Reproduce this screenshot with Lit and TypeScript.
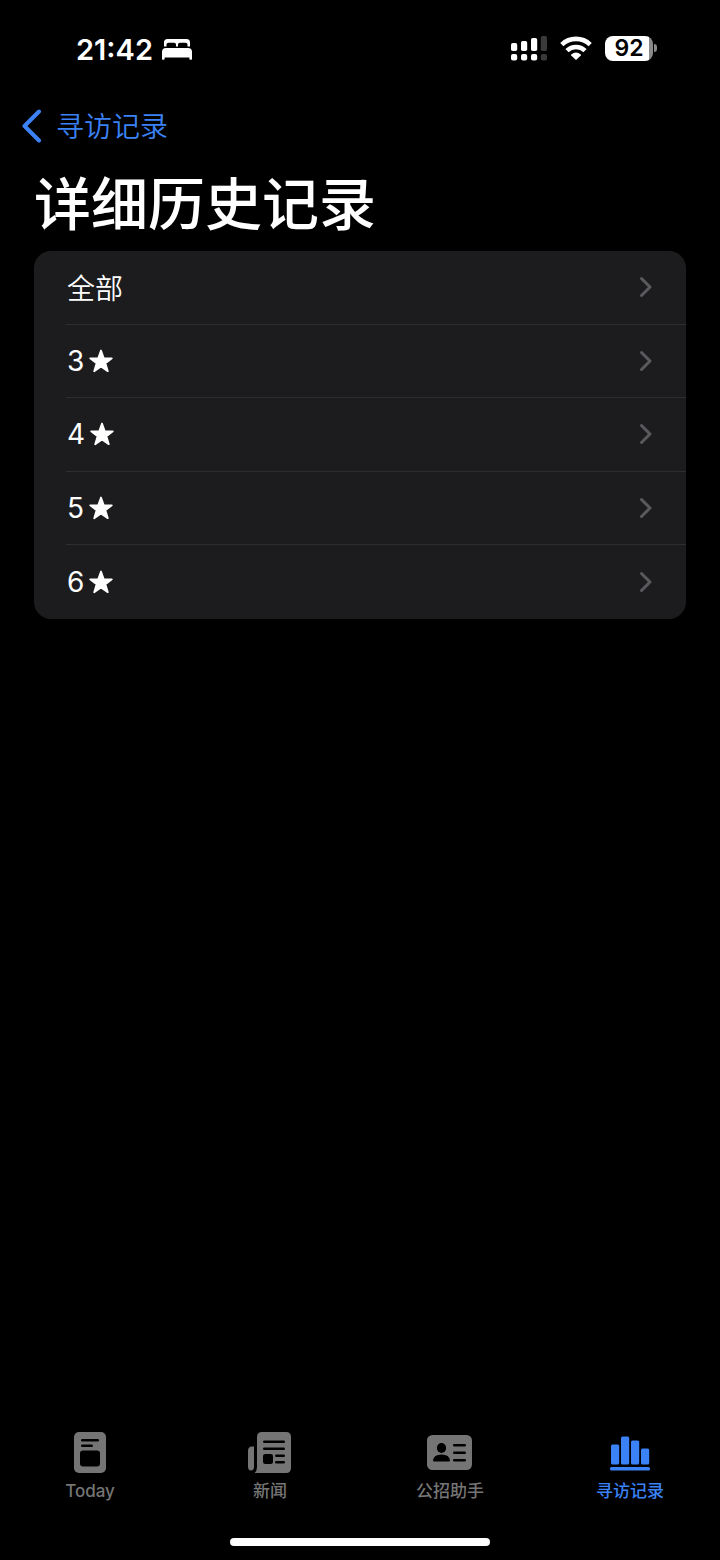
import { LitElement, html, css, svg } from "lit";
import { customElement, property, state } from "lit/decorators.js";
import { classMap } from "lit/directives/class-map.js";

const bedIcon = svg`
  <svg viewBox="0 0 32 22" width="32" height="22" aria-hidden="true">
    <path fill="currentColor" d="M3 8.500V4.500Q3 1 6.500 1H25.500Q29 1 29 4.500V8.500H26.500V6.500Q26.500 4.800 24.500 4.800H19Q17 4.800 17 6.500V8.500H15V6.500Q15 4.800 13 4.800H7.500Q5.500 4.800 5.500 6.500V8.500Z"/>
    <path fill="currentColor" d="M1 21V14Q1 10 5 10H27Q31 10 31 14V21Q31 21.800 30.200 21.800H29.200Q28.400 21.800 28.400 21V19.500H3.600V21Q3.600 21.800 2.800 21.800H1.800Q1 21.800 1 21Z"/>
  </svg>`;

const signalIcon = svg`
  <svg viewBox="0 0 37 26" width="37" height="26" aria-hidden="true">
    <g fill="#fff">
      <rect x="1" y="8" width="6.200" height="8" rx="1.800"/>
      <rect x="11" y="6" width="6.200" height="10" rx="1.800"/>
      <rect x="21" y="3" width="6.200" height="13" rx="1.800"/>
      <rect x="1" y="19" width="6.200" height="6.500" rx="2"/>
      <rect x="11" y="19" width="6.200" height="6.500" rx="2"/>
      <rect x="21" y="19" width="6.200" height="6.500" rx="2"/>
    </g>
    <g fill="#3a3a3a">
      <rect x="30.800" y="1" width="6.200" height="15" rx="1.800"/>
      <rect x="30.800" y="19" width="6.200" height="6.500" rx="2"/>
    </g>
  </svg>`;

const wifiIcon = svg`
  <svg viewBox="0 0 32 24" width="32" height="24" aria-hidden="true">
    <g fill="none" stroke="#fff" stroke-width="4.600">
      <path d="M1.800 8.600A20.500 20.500 0 0 1 30.200 8.600"/>
      <path d="M7 14.600A13 13 0 0 1 25 14.600"/>
    </g>
    <path fill="#fff" d="M11.200 18.600Q16 14.600 20.800 18.600Q21.300 19.100 20.800 19.600L16.600 23.500Q16 24 15.400 23.500L11.200 19.600Q10.700 19.100 11.200 18.600Z"/>
  </svg>`;

const backIcon = svg`
  <svg viewBox="0 0 20 36" width="20" height="36" aria-hidden="true">
    <path d="M17 4.500L2.500 19L17 33.500" fill="none" stroke="currentColor" stroke-width="4" stroke-linecap="round" stroke-linejoin="round"/>
  </svg>`;

const chevronIcon = svg`
  <svg viewBox="0 0 14 22" width="14" height="22" aria-hidden="true">
    <path d="M2.500 2.500L11 11L2.500 19.500" fill="none" stroke="#5a5a5e" stroke-width="3" stroke-linecap="round" stroke-linejoin="round"/>
  </svg>`;

const starIcon = svg`
  <svg viewBox="0 0 24 24" width="24" height="24" aria-hidden="true">
    <path d="M12 1.500L14.800 9.300H22.800L16.400 14.200L18.800 22.200L12 17.500L5.200 22.200L7.600 14.200L1.200 9.300H9.200Z" fill="#fff" stroke="#fff" stroke-width="1.800" stroke-linejoin="round"/>
  </svg>`;

const todayIcon = svg`
  <svg viewBox="0 0 48 44" width="48" height="44" aria-hidden="true">
    <rect x="8" y="2" width="32" height="41" rx="5" fill="currentColor"/>
    <g fill="#000">
      <rect x="15" y="9" width="18" height="2.600" rx="1.300"/>
      <rect x="15" y="14.500" width="12" height="2.600" rx="1.300"/>
      <rect x="14" y="20.500" width="20" height="16" rx="3"/>
    </g>
  </svg>`;

const newsIcon = svg`
  <svg viewBox="0 0 48 44" width="48" height="44" aria-hidden="true">
    <path fill="currentColor" d="M11 7Q11 2 16 2H40Q45 2 45 7V38Q45 43 40 43H8.500Q11 41 11 37Z"/>
    <path fill="currentColor" d="M2 21Q2 16.500 6 16.500H8V36Q8 40.500 5 40.500Q2 40.500 2 36.500Z"/>
    <g fill="#000">
      <rect x="17" y="10.500" width="22" height="2.600" rx="1.300"/>
      <rect x="17" y="17.500" width="22" height="2.600" rx="1.300"/>
      <rect x="17" y="24" width="10" height="10" rx="2.200"/>
      <rect x="29" y="24.500" width="10" height="2.600" rx="1.300"/>
      <rect x="29" y="31" width="10" height="2.600" rx="1.300"/>
    </g>
  </svg>`;

const cardIcon = svg`
  <svg viewBox="0 0 48 44" width="48" height="44" aria-hidden="true">
    <rect x="1" y="5" width="45" height="35" rx="5.500" fill="currentColor"/>
    <g fill="#000">
      <ellipse cx="15.500" cy="18" rx="4.600" ry="5"/>
      <path d="M7 30.500Q7.500 24.500 15.500 24.500T24 30.500Q24 31.500 23 31.500H8Q7 31.500 7 30.500Z"/>
      <rect x="27" y="14" width="13" height="2.400" rx="1.200"/>
      <rect x="27" y="21.500" width="13" height="2.400" rx="1.200"/>
      <rect x="27" y="29" width="13" height="2.400" rx="1.200"/>
    </g>
  </svg>`;

const chartIcon = svg`
  <svg viewBox="0 0 48 44" width="48" height="44" aria-hidden="true">
    <g fill="currentColor">
      <rect x="5" y="14.500" width="8.200" height="20" rx="1.500"/>
      <rect x="15" y="6.500" width="8.200" height="28" rx="1.500"/>
      <rect x="25" y="10.500" width="8.200" height="24" rx="1.500"/>
      <rect x="35" y="18.500" width="8.200" height="16" rx="1.500"/>
      <rect x="4" y="37" width="40" height="3.400" rx="1.500"/>
    </g>
  </svg>`;

@customElement("status-bar")
export class StatusBar extends LitElement {
  @property() time = "";
  @property({ type: Number }) battery = 100;

  static styles = css`
    :host {
      display: flex;
      justify-content: space-between;
      align-items: center;
      height: 96px;
      padding: 0 63px 0 76px;
      color: #fff;
      font-weight: 600;
    }
    .left,
    .right {
      display: flex;
      align-items: center;
    }
    .left {
      gap: 8px;
      padding-top: 2px;
      font-size: 29px;
    }
    .right {
      gap: 13px;
    }
    .battery {
      display: flex;
      align-items: center;
      gap: 1px;
    }
    .cell {
      width: 48px;
      height: 25px;
      line-height: 25px;
      border-radius: 8px;
      text-align: center;
      font-size: 23px;
      font-weight: 600;
      color: #000;
      background: linear-gradient(to right, #fff 92%, #8a8a8a 92%);
    }
    .nub {
      width: 3px;
      height: 8px;
      border-radius: 0 4px 4px 0;
      background: #8a8a8a;
    }
  `;

  render() {
    return html`
      <div class="left"><span>${this.time}</span>${bedIcon}</div>
      <div class="right">
        ${signalIcon}${wifiIcon}
        <div class="battery">
          <div class="cell">${this.battery}</div>
          <div class="nub"></div>
        </div>
      </div>
    `;
  }
}

const rows = [
  { label: "全部", star: false },
  { label: "3", star: true },
  { label: "4", star: true },
  { label: "5", star: true },
  { label: "6", star: true },
];

const tabs = [
  { label: "Today", icon: todayIcon },
  { label: "新闻", icon: newsIcon },
  { label: "公招助手", icon: cardIcon },
  { label: "寻访记录", icon: chartIcon },
];

@customElement("app-root")
export class AppRoot extends LitElement {
  @state() private activeTab = 3;

  static styles = css`
    :host {
      display: flex;
      flex-direction: column;
      min-height: 100vh;
      box-sizing: border-box;
      background: #000;
      color: #fff;
      font-family: Inter, "Noto Sans CJK SC", sans-serif;
    }
    svg {
      display: block;
      flex: none;
    }
    button {
      border: 0;
      margin: 0;
      padding: 0;
      background: none;
      color: inherit;
      font: inherit;
      cursor: pointer;
    }
    .nav {
      display: flex;
      align-items: center;
      height: 58px;
      padding: 0 22px;
    }
    .back {
      display: flex;
      align-items: center;
      gap: 14px;
      color: #3b82f6;
      font-size: 28px;
      font-weight: 350;
      text-decoration: none;
    }
    main {
      flex: 1;
      padding: 0 34px;
    }
    h1 {
      margin: 0;
      padding: 11px 0 6px;
      font-size: 57px;
      line-height: 80px;
      font-weight: 500;
    }
    .list {
      display: grid;
      grid-auto-rows: 1fr;
      min-height: 368px;
      margin: 0;
      padding: 0;
      list-style: none;
      border-radius: 17px;
      background: #1c1c1e;
      overflow: hidden;
    }
    .item {
      display: flex;
      padding-left: 32px;
    }
    .row {
      flex: 1;
      display: flex;
      justify-content: space-between;
      align-items: center;
      padding: 0 33px 0 1px;
      border-bottom: 1px solid #2d2d30;
      font-size: 28px;
      font-weight: 350;
      text-align: left;
    }
    .item:last-child .row {
      border-bottom-color: transparent;
    }
    .label {
      display: flex;
      align-items: center;
      gap: 5px;
    }
    .label.rarity {
      font-weight: 400;
    }
    .tabs {
      display: grid;
      grid-template-columns: repeat(4, 1fr);
      padding-bottom: 34px;
    }
    .tab {
      display: flex;
      flex-direction: column;
      align-items: center;
      gap: 4px;
      color: #757575;
      font-size: 17px;
      line-height: 26px;
      font-weight: 500;
    }
    .tab.active {
      color: #3b82f6;
    }
    .home {
      align-self: center;
      width: 36%;
      height: 8px;
      margin-bottom: 14px;
      border-radius: 4px;
      background: #fff;
    }
  `;

  render() {
    return html`
      <status-bar time="21:42" battery="92"></status-bar>
      <nav class="nav">
        <a class="back" href="#">${backIcon}<span>寻访记录</span></a>
      </nav>
      <main>
        <h1>详细历史记录</h1>
        <ul class="list">
          ${rows.map(
            (row) => html`
              <li class="item">
                <button class="row" type="button">
                  <span class=${classMap({ label: true, rarity: row.star })}
                    >${row.label}${row.star ? starIcon : ""}</span
                  >
                  ${chevronIcon}
                </button>
              </li>
            `
          )}
        </ul>
      </main>
      <nav class="tabs">
        ${tabs.map(
          (tab, i) => html`
            <button
              type="button"
              class=${classMap({ tab: true, active: i === this.activeTab })}
              @click=${() => (this.activeTab = i)}
            >
              ${tab.icon}<span>${tab.label}</span>
            </button>
          `
        )}
      </nav>
      <div class="home"></div>
    `;
  }
}
